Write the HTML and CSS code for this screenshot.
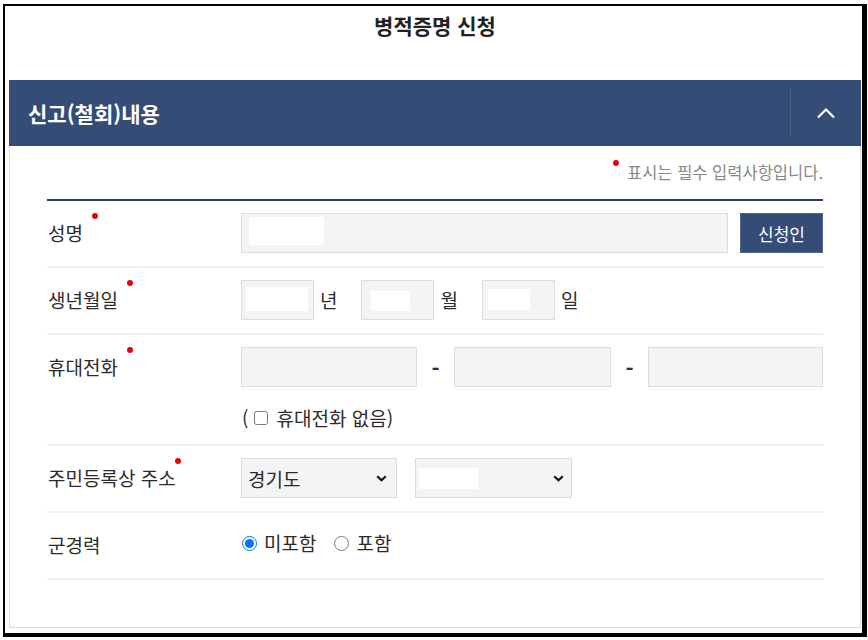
FILE: index.html
```html
<!DOCTYPE html>
<html lang="ko">
<head>
<meta charset="utf-8">
<title>병적증명 신청</title>
<link rel="stylesheet" href="styles.css">
</head>
<body>
<div class="frame">
  <h1 class="title">병적증명 신청</h1>
  <section class="panel">
    <div class="panel-head">
      <h2 class="panel-title">신고(철회)내용</h2>
      <button class="toggle" type="button" aria-label="접기">
        <svg width="20" height="12" viewBox="0 0 20 12"><polyline points="2,10.5 10,2.5 18,10.5" fill="none" stroke="#fff" stroke-width="2.2"/></svg>
      </button>
    </div>
    <div class="panel-body">
      <p class="note"><span class="dot dot-note"></span>표시는 필수 입력사항입니다.</p>
      <div class="form">
        <div class="row">
          <div class="label">성명<span class="dot"></span></div>
          <div class="ctrl">
            <div class="field field-grow"><span class="mask mask-name"></span></div>
            <button class="btn" type="button">신청인</button>
          </div>
        </div>
        <div class="row">
          <div class="label">생년월일<span class="dot"></span></div>
          <div class="ctrl">
            <div class="field field-date"><span class="mask mask-year"></span></div>
            <span class="unit">년</span>
            <div class="field field-date"><span class="mask mask-month"></span></div>
            <span class="unit">월</span>
            <div class="field field-date"><span class="mask mask-day"></span></div>
            <span class="unit">일</span>
          </div>
        </div>
        <div class="row">
          <div class="label">휴대전화<span class="dot"></span></div>
          <div class="ctrl ctrl-col">
            <div class="phone">
              <div class="field field-p1"></div>
              <span class="dash">-</span>
              <div class="field field-p2"></div>
              <span class="dash">-</span>
              <div class="field field-grow"></div>
            </div>
            <label class="nophone">(<input type="checkbox" class="chk">휴대전화 없음)</label>
          </div>
        </div>
        <div class="row">
          <div class="label">주민등록상 주소<span class="dot dot-near"></span></div>
          <div class="ctrl">
            <div class="select"><span class="sel-text">경기도</span><svg class="caret" width="11" height="7" viewBox="0 0 11 7"><polyline points="1.2,1.2 5.5,5.3 9.8,1.2" fill="none" stroke="#111" stroke-width="2.2"/></svg></div>
            <div class="select select-2"><span class="mask mask-sel"></span><svg class="caret" width="11" height="7" viewBox="0 0 11 7"><polyline points="1.2,1.2 5.5,5.3 9.8,1.2" fill="none" stroke="#111" stroke-width="2.2"/></svg></div>
          </div>
        </div>
        <div class="row">
          <div class="label">군경력</div>
          <div class="ctrl radios">
            <label class="radio"><input type="radio" name="mil" checked>미포함</label>
            <label class="radio"><input type="radio" name="mil">포함</label>
          </div>
        </div>
      </div>
    </div>
  </section>
</div>
</body>
</html>
```
FILE: styles.css
```css
* { box-sizing: border-box; }
html, body { margin: 0; padding: 0; background: #fff; }
body {
  font-family: "Noto Sans CJK KR", "Noto Sans", sans-serif;
  color: #333;
  width: 868px;
  height: 640px;
  overflow: hidden;
}
.frame {
  margin: 4px 0 0 3px;
  width: 864px;
  height: 633px;
  border-style: solid;
  border-color: #000;
  border-width: 2px 5px 4px 2px;
  padding: 0 1px 0 4px;
}
.title {
  margin: 0;
  padding-top: 7px;
  height: 74px;
  font-size: 21px;
  line-height: 24px;
  font-weight: 700;
  color: #222;
  text-align: center;
}
.panel {
  border: 1px solid #dcdcdc;
  height: 548px;
}
.panel-head {
  display: flex;
  align-items: center;
  height: 66px;
  margin: -1px -1px 0 -1px;
  background: #354c77;
}
.panel-title {
  flex: 1;
  margin: 0;
  padding-left: 19px;
  font-size: 21px;
  font-weight: 700;
  line-height: 28px;
  color: #fff;
}
.toggle {
  width: 71px;
  height: 50px;
  padding: 0;
  border: 0;
  border-left: 1px solid #4a5f88;
  background: transparent;
  display: flex;
  align-items: center;
  justify-content: center;
}
.panel-body {
  padding: 14px 37px 0 37px;
}
.note {
  margin: 0;
  text-align: right;
  font-size: 16.5px;
  line-height: 24px;
  color: #888;
}
.dot {
  display: inline-block;
  width: 6px;
  height: 6px;
  border-radius: 50%;
  background: #e8000d;
  vertical-align: top;
  margin-left: 9px;
}
.dot-note {
  margin: 0 8px 0 0;
}
.dot-near { margin-left: -1px; }
.form {
  margin-top: 15px;
  border-top: 2px solid #2f4269;
}
.row {
  display: flex;
  align-items: flex-start;
  padding: 12px 0 13px;
  border-bottom: 2px solid #efefef;
}
.label {
  width: 194px;
  flex: none;
  padding-left: 1px;
  font-size: 19px;
  line-height: 40px;
  color: #2b2b2b;
}
.ctrl {
  flex: 1;
  display: flex;
  align-items: center;
  min-height: 40px;
}
.ctrl-col {
  flex-direction: column;
  align-items: stretch;
}
.field {
  height: 40px;
  background: #f4f4f4;
  border: 1px solid #dcdcdc;
}
.field-grow { flex: 1; }
.field-date { width: 73px; flex: none; }
.field-p1 { width: 176px; flex: none; }
.field-p2 { width: 157px; flex: none; }
.mask {
  display: block;
  background: #fff;
}
.mask-name { width: 75px; height: 28px; margin: 3px 0 0 7px; }
.mask-year { width: 62px; height: 24px; margin: 6px 0 0 4px; }
.mask-month { width: 39px; height: 20px; margin: 10px 0 0 9px; }
.mask-day { width: 42px; height: 21px; margin: 8px 0 0 5px; }
.mask-sel { width: 59px; height: 21px; margin: 0 0 0 3px; }
.btn {
  width: 83px;
  height: 40px;
  margin-left: 12px;
  flex: none;
  background: #354c77;
  border: 1px solid #50668f;
  color: #fff;
  font-family: inherit;
  font-size: 17px;
  padding: 0;
}
.unit {
  font-size: 19px;
  line-height: 40px;
  margin: 0 24px 0 6px;
  color: #2b2b2b;
}
.phone {
  display: flex;
  align-items: center;
}
.dash {
  width: 37px;
  flex: none;
  text-align: center;
  font-size: 22px;
  font-weight: 700;
  line-height: 40px;
  color: #333;
}
.nophone {
  display: flex;
  align-items: center;
  margin-top: 18px;
  padding-left: 1px;
  font-size: 19px;
  line-height: 26px;
  color: #2b2b2b;
}
.chk {
  width: 14px;
  height: 14px;
  margin: 0 8px 0 6px;
}
.select {
  width: 156px;
  height: 40px;
  flex: none;
  display: flex;
  align-items: center;
  justify-content: space-between;
  background: #f4f4f4;
  border: 1px solid #dcdcdc;
  padding: 0 9px 0 6px;
}
.select-2 { width: 157px; margin-left: 18px; padding-left: 0; padding-right: 7px; }
.sel-text { font-size: 19px; color: #2b2b2b; }
.caret { flex: none; }
.radios { height: 40px; align-items: center; padding-bottom: 6px; }
.radio {
  display: flex;
  align-items: center;
  font-size: 19px;
  color: #2b2b2b;
  margin-right: 17px;
}
.radio input {
  width: 15px;
  height: 15px;
  margin: 2px 7px 0 1px;
}
```
